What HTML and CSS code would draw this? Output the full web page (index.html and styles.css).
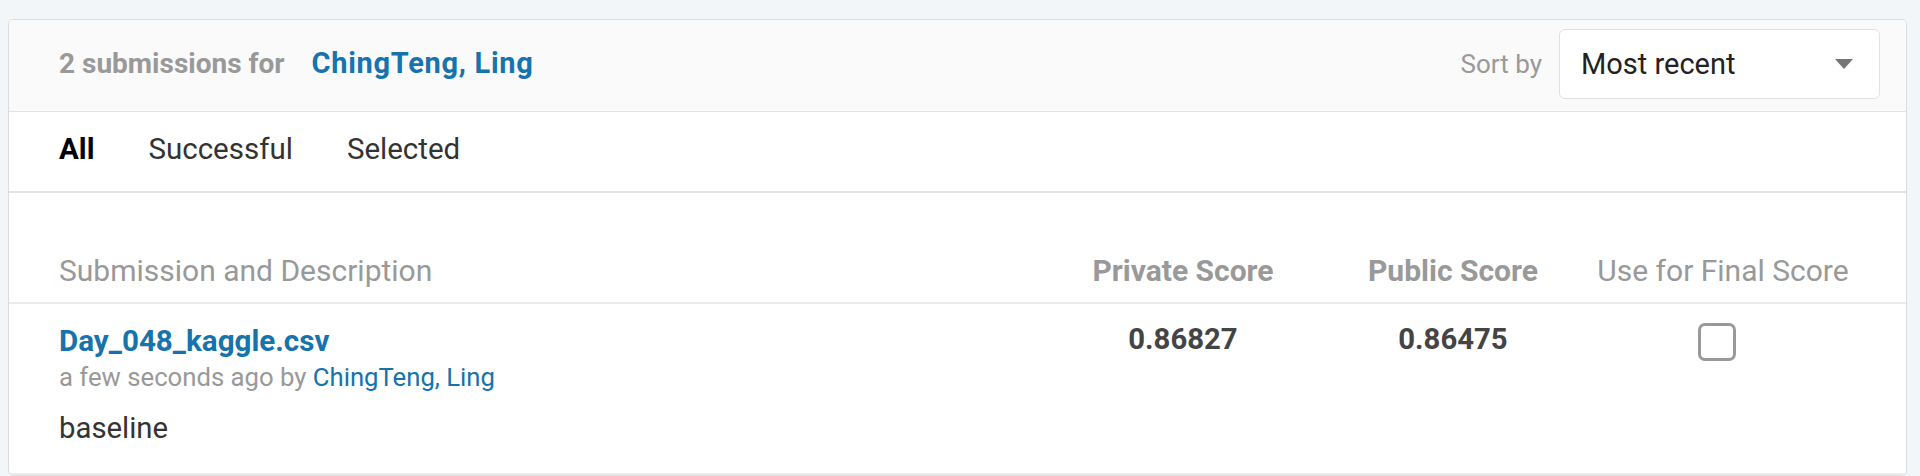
FILE: index.html
```html
<!DOCTYPE html>
<html>
<head>
<meta charset="utf-8">
<link rel="stylesheet" href="styles.css">
</head>
<body>
<div class="page">
  <div class="card">
    <div class="card-header">
      <div class="title"><span class="count">2 submissions for</span><a class="user">ChingTeng, Ling</a></div>
      <div class="sort">
        <span class="sort-label">Sort by</span>
        <div class="select">
          <span class="select-value">Most recent</span>
          <svg class="caret" width="18" height="10" viewBox="0 0 18 10"><polygon points="0,0 18,0 9,10" fill="#757575"/></svg>
        </div>
      </div>
    </div>
    <div class="tabs">
      <span class="tab active">All</span>
      <span class="tab">Successful</span>
      <span class="tab">Selected</span>
    </div>
    <div class="table">
      <div class="row thead">
        <div class="col-main">Submission and Description</div>
        <div class="col-score strong">Private Score</div>
        <div class="col-score strong">Public Score</div>
        <div class="col-score">Use for Final Score</div>
      </div>
      <div class="row tbody">
        <div class="col-main">
          <a class="file">Day_048_kaggle.csv</a>
          <div class="meta">a few seconds ago by <a class="meta-user">ChingTeng, Ling</a></div>
          <div class="desc">baseline</div>
        </div>
        <div class="col-score score">0.86827</div>
        <div class="col-score score">0.86475</div>
        <div class="col-score"><span class="checkbox"></span></div>
      </div>
    </div>
  </div>
</div>
</body>
</html>
```

FILE: styles.css
```css
* { box-sizing: border-box; }
html, body { margin: 0; padding: 0; }
body {
  background: #f3f6f9;
  font-family: Roboto, "Liberation Sans", sans-serif;
  height: 476px;
  overflow: hidden;
}
.page { padding: 19px 13px 0 8px; }
.card {
  background: #fff;
  border: 1px solid #dcdcdc;
  border-radius: 5px;
  overflow: hidden;
}
.card-header {
  height: 92px;
  background: #fafafa;
  border-bottom: 1px solid #e3e3e3;
  display: flex;
  align-items: flex-start;
  justify-content: space-between;
  padding: 0 26px 0 50px;
}
.title {
  margin-top: 26.5px;
  font-size: 28px;
  line-height: 32px;
  font-weight: 700;
  display: flex;
  align-items: baseline;
}
.count { color: #999; }
.user { color: #1673ab; margin-left: 27px; font-size: 29px; letter-spacing: 0.7px; }
.sort { display: flex; align-items: center; margin-top: 9px; }
.sort-label { color: #999; font-size: 26px; margin-right: 17px; }
.select {
  width: 321px;
  height: 70px;
  background: #fff;
  border: 1px solid #e1e1e1;
  border-radius: 6px;
  display: flex;
  align-items: center;
  justify-content: space-between;
  padding: 0 26px 0 21px;
}
.select-value { color: #222; font-size: 29px; }
.caret { display: block; }
.tabs {
  height: 81px;
  border-bottom: 2px solid #e3e3e3;
  display: flex;
  align-items: center;
  padding: 0 0 5.5px 50px;
  gap: 54px;
}
.tab { font-size: 29.5px; color: #333; }
.tab.active { color: #000; font-weight: 700; }
.table { padding: 0 48px 0 50px; }
.row { display: flex; }
.col-main { flex: 1; }
.col-score { width: 270px; text-align: center; }
.thead {
  height: 111px;
  align-items: flex-end;
  padding-bottom: 13.5px;
  border-bottom: 2px solid #ebebeb;
  margin: 0 -48px 0 -50px;
  padding-left: 50px;
  padding-right: 48px;
  color: #999;
  font-size: 30px;
  line-height: 36px;
}
.thead .strong { font-weight: 700; }
.tbody {
  height: 171px;
  border-bottom: 2px solid #ebebeb;
  margin: 0 -48px 0 -50px;
  padding: 18.5px 48px 0 50px;
  align-items: flex-start;
}
.file { display: block; color: #1673ab; font-weight: 700; font-size: 29.6px; line-height: 36px; }
.meta { color: #999; font-size: 25.7px; line-height: 37px; }
.meta-user { color: #1673ab; }
.desc { color: #333; font-size: 29.3px; line-height: 36px; margin-top: 14px; }
.score { color: #444; font-weight: 700; font-size: 29.3px; line-height: 36px; margin-top: -1.5px; }
.checkbox {
  display: inline-block;
  width: 38px;
  height: 38px;
  border: 3px solid #999;
  border-radius: 7px;
  margin-top: 0;
  margin-right: 12px;
}
```
